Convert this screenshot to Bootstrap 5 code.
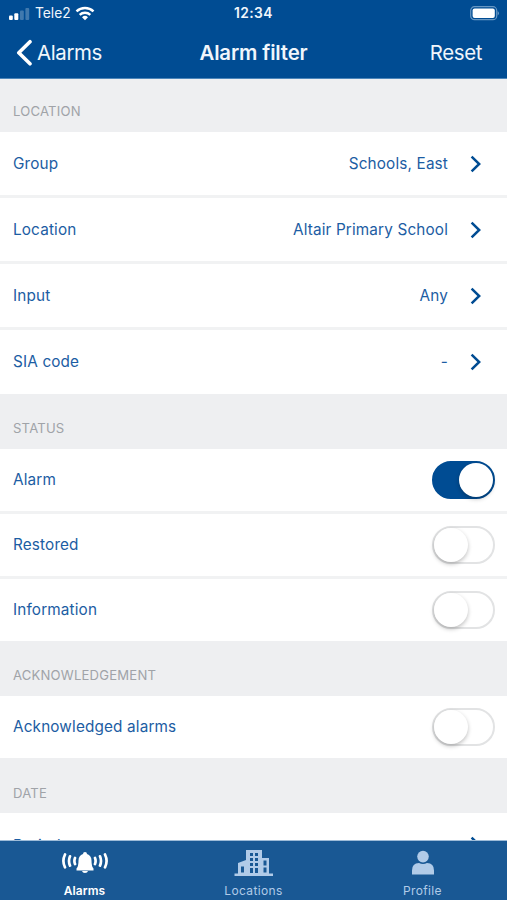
<!DOCTYPE html>
<html lang="en">
<head>
<meta charset="utf-8">
<meta name="viewport" content="width=device-width, initial-scale=1">
<title>Alarm filter</title>
<link href="https://cdn.jsdelivr.net/npm/bootstrap@5.3.0/dist/css/bootstrap.min.css" rel="stylesheet">
<style>
:root{--brand:#004c93;--ink:#1c5da3;--panel:#eeeff1}
body{font-family:Inter,"Liberation Sans",sans-serif;color:var(--ink);height:900px;overflow:hidden}
.app-head{background:var(--brand);height:79px;color:#f0f6fc;border-bottom:1px solid #4d86ba}
.status-line{height:27px;font-size:13.8px;line-height:27px;display:grid;grid-template-columns:1fr auto 1fr}
.clock{font-weight:600;letter-spacing:.4px}
.title-line{height:50px;display:grid;grid-template-columns:1fr auto 1fr;font-size:20.4px;letter-spacing:-.35px;line-height:51px}
.title-line h1{font-size:20.4px;line-height:51px;font-weight:600;letter-spacing:-.15px}
.reset-link{padding-right:25px}
.app-main{overflow:hidden;min-height:0}
.section-label{background:var(--panel);color:#a0a3a8;font-size:13.1px;line-height:16px;letter-spacing:.2px;padding:26px 13px 13px;height:55px;margin:0;font-weight:400}
.section-label.first{height:53px;padding-top:24px}
.section-label.last{padding-top:27px;padding-bottom:12px}
.filter-list{font-size:15.3px;letter-spacing:.15px;line-height:22px}
.filter-row{height:66px;padding:0 26px 0 13px;border-bottom:3px solid #f1f2f3}
.filter-row:last-child{height:64px}
.date-row.filter-row{height:66px}
.toggle-row{height:65px;padding:0 12px 0 13px;border-bottom:3px solid #f1f2f3}
.toggle-row:last-child{height:62px}
.filter-list>:last-child{border-bottom:0}
.chev{width:11px;height:18px;margin-left:22px}
.date-row .chev{margin-top:-2px}
.date-row span{margin-top:-1px}
.switch{width:63px;height:38px;border-radius:19px;border:2px solid #e2e3e4;background:#fff}
.knob{width:34px;height:34px;border-radius:50%;background:#fff;box-shadow:0 2px 4px rgba(0,0,0,.25)}
.switch.on{background:var(--brand);border-color:var(--brand)}
.tab-bar{height:60px;background:#195894;color:#b1cbe8;font-size:12px;line-height:14px;letter-spacing:.35px;border-top:1px solid #9dbbd8}
.tab-bar svg{height:28px;margin-top:8px;margin-bottom:7px}
.tab-bar .current{color:#fff;font-weight:600;letter-spacing:.1px}
</style>
</head>
<body class="d-flex flex-column bg-white">
<header class="app-head flex-shrink-0">
  <div class="status-line">
    <div class="d-flex align-items-center">
      <svg class="ms-2" width="23" height="14" viewBox="0 0 23 14" fill="#fff"><rect x="1" y="8.6" width="3.8" height="4.4" rx="1"/><rect x="6.3" y="6.2" width="4" height="6.8" rx="1"/><g opacity=".25"><rect x="12" y="3.4" width="3.8" height="9.6" rx="1"/><rect x="17.4" y="1" width="3.8" height="12" rx="1"/></g></svg>
      <span class="ms-1">Tele2</span>
      <svg class="ms-1" width="20" height="15" viewBox="0 0 20 15" fill="none" stroke="#fff" stroke-width="2.4"><path d="M1.5 5.4a12.3 12.3 0 0 1 17 0M4.7 8.8a7.7 7.7 0 0 1 10.6 0"/><path d="M7 11.2a4.5 4.5 0 0 1 6 0L10 14.2z" fill="#fff" stroke="none"/></svg>
    </div>
    <span class="clock">12:34</span>
    <div class="d-flex align-items-center justify-content-end pe-2">
      <svg width="29" height="15" viewBox="0 0 29 15"><rect x=".7" y=".7" width="26" height="13" rx="3.8" fill="none" stroke="#6797c3" stroke-width="1.2"/><rect x="2.600" y="2.500" width="22.2" height="9.400" rx="2" fill="#fff"/><path d="M27.600 5v4.600q1.400-.8 1.400-2.300T27.600 5" fill="#6797c3"/></svg>
    </div>
  </div>
  <div class="title-line">
    <a class="d-flex align-items-center text-reset text-decoration-none ps-3" href="#"><svg width="17" height="27" viewBox="0 0 17 27" fill="none" stroke="#fff" stroke-width="3.600" stroke-linecap="round" stroke-linejoin="round"><path d="M14 2.700 2.800 13.700 14 24.800"/></svg><span class="ms-1">Alarms</span></a>
    <h1 class="m-0">Alarm filter</h1>
    <a class="reset-link text-reset text-decoration-none text-end" href="#">Reset</a>
  </div>
</header>
<main class="app-main flex-grow-1">
  <h2 class="section-label first">LOCATION</h2>
  <div class="filter-list">
    <div class="filter-row d-flex align-items-center"><span>Group</span><span class="ms-auto">Schools, East</span><svg class="chev" viewBox="0 0 11 18"><use href="#chevron"/></svg></div>
    <div class="filter-row d-flex align-items-center"><span>Location</span><span class="ms-auto">Altair Primary School</span><svg class="chev" viewBox="0 0 11 18"><use href="#chevron"/></svg></div>
    <div class="filter-row d-flex align-items-center"><span>Input</span><span class="ms-auto">Any</span><svg class="chev" viewBox="0 0 11 18"><use href="#chevron"/></svg></div>
    <div class="filter-row d-flex align-items-center"><span>SIA code</span><span class="ms-auto">-</span><svg class="chev" viewBox="0 0 11 18"><use href="#chevron"/></svg></div>
  </div>
  <h2 class="section-label">STATUS</h2>
  <div class="filter-list">
    <div class="toggle-row d-flex align-items-center justify-content-between"><span>Alarm</span><div class="switch on d-flex justify-content-end" role="switch" aria-checked="true"><div class="knob"></div></div></div>
    <div class="toggle-row d-flex align-items-center justify-content-between"><span>Restored</span><div class="switch d-flex" role="switch" aria-checked="false"><div class="knob"></div></div></div>
    <div class="toggle-row d-flex align-items-center justify-content-between"><span>Information</span><div class="switch d-flex" role="switch" aria-checked="false"><div class="knob"></div></div></div>
  </div>
  <h2 class="section-label">ACKNOWLEDGEMENT</h2>
  <div class="filter-list">
    <div class="toggle-row d-flex align-items-center justify-content-between"><span>Acknowledged alarms</span><div class="switch d-flex" role="switch" aria-checked="false"><div class="knob"></div></div></div>
  </div>
  <h2 class="section-label last">DATE</h2>
  <div class="filter-list">
    <div class="filter-row date-row d-flex align-items-center"><span>Period</span><svg class="chev ms-auto" viewBox="0 0 11 18"><use href="#chevron"/></svg></div>
  </div>
</main>
<nav class="tab-bar d-flex flex-shrink-0 text-center">
  <div class="current col-4 d-flex flex-column align-items-center"><svg width="46" height="28" viewBox="0 0 46 28" fill="none" stroke="currentColor" stroke-width="2.700" stroke-linecap="round"><path d="M3 5.500Q-.2 12 3 18.300M8 7.300q-2 4.700 0 9.300M13 9q-1.200 3 0 6M43 5.500q3.200 6.500 0 12.800M38 7.300q2 4.700 0 9.300M33 9q1.200 3 0 6"/><path d="M23 3q2 0 2 2 4.500 1.500 4.500 6.500 0 6 2 8v2H14.500v-2q2-2 2-8 0-5 4.500-6.500 0-2 2-2zM20 22h6q-.5 2-3 2t-3-2z" fill="currentColor" stroke="none"/></svg><span>Alarms</span></div>
  <div class="col-4 d-flex flex-column align-items-center"><svg width="40" height="28" viewBox="0 0 40 28" fill="currentColor" fill-rule="evenodd"><path d="M.5 24.500H4V14l8-3V1h16v8h7v15.500h4V27H.5zM7 17.500v6h3v-6zM16 4v3h3V4zm5 0v3h3V4zm-5 5v3h3V9zm5 0v3h3V9zm-5 5v3h3v-3zm5 0v3h3v-3zm-5 5v5h3v-5zm5 0v5h3v-5zm8.500-7.500v5h3v-5zm0 7v5h3v-5z"/></svg><span>Locations</span></div>
  <div class="col-4 d-flex flex-column align-items-center"><svg width="24" height="28" viewBox="0 0 24 28" fill="currentColor"><circle cx="12" cy="7.600" r="5.800"/><path d="M1 25.500v-4Q1 14 8 14q4 2 8 0 7 0 7 7.500v4z"/></svg><span>Profile</span></div>
</nav>
<svg width="0" height="0" class="position-absolute"><symbol id="chevron" viewBox="0 0 11 18"><path d="M1.600 1.600 9.200 9 1.600 16.400" fill="none" stroke="#004c93" stroke-width="2.500"/></symbol></svg>
<script src="https://cdn.jsdelivr.net/npm/bootstrap@5.3.0/dist/js/bootstrap.bundle.min.js"></script>
</body>
</html>
